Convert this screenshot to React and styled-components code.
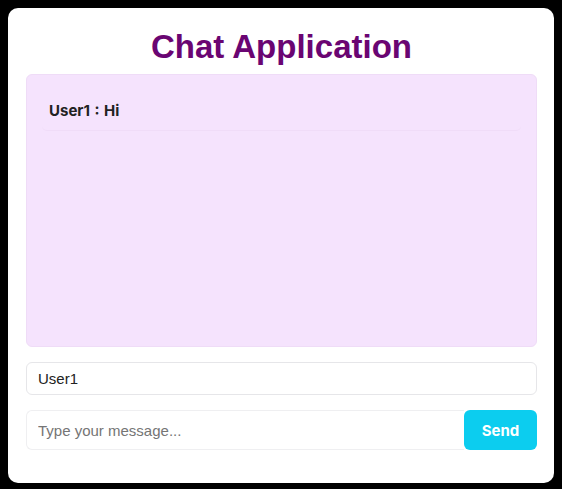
import React, { useState } from "react";
import styled, { createGlobalStyle } from "styled-components";

const Global = createGlobalStyle`
  html, body { background: #000; }
  body { margin: 8px; font-family: "Liberation Sans", Arial, sans-serif; }
  * { box-sizing: border-box; }
`;

const Card = styled.div`
  background: #fff;
  border-radius: 10px;
  padding: 20px 17px 33px 18px;
  display: flex;
  flex-direction: column;
`;

const Title = styled.h1`
  margin: 0 0 8px;
  text-align: center;
  font-family: "Liberation Sans", Arial, sans-serif;
  font-weight: 700;
  font-size: 33px;
  line-height: 38px;
  color: #6a0572;
`;

const ChatBox = styled.div`
  height: 273px;
  background: #f5e3fd;
  border: 1px solid #efdcf7;
  border-radius: 6px;
  padding: 15px;
  overflow-y: auto;
`;

const Message = styled.div`
  padding: 10px 7px 8px;
  line-height: 22px;
  border-bottom: 1px solid #f0dcf8;
  border-radius: 5px;
  font-family: Inter, "Noto Sans", sans-serif;
  font-weight: 700;
  font-size: 15px;
  word-spacing: 1px;
  color: #222;
`;

const Form = styled.div`
  display: flex;
  flex-direction: column;
  gap: 15px;
  margin-top: 15px;
`;

const Field = styled.input`
  width: 100%;
  height: ${(p) => p.$h}px;
  border: 1px solid #e6e6e9;
  border-radius: 6px;
  padding: 0 11px;
  font-family: "Liberation Sans", Arial, sans-serif;
  font-size: 15px;
  color: #222;
  background: #fff;
  outline: none;
  &::placeholder { color: #757575; }
`;

const Row = styled.div`
  display: flex;
`;

const MsgField = styled(Field)`
  flex: 1;
  border-color: #efeff1;
  border-radius: 6px 0 0 6px;
  border-right: none;
`;

const SendButton = styled.button`
  width: 73px;
  height: 40px;
  border: none;
  border-radius: 6px;
  background: #0ccdef;
  color: #fff;
  font-family: Inter, "Noto Sans", sans-serif;
  font-weight: 700;
  font-size: 15px;
  cursor: pointer;
`;

export default function App() {
  const [name, setName] = useState("User1");
  const [text, setText] = useState("");
  const [messages, setMessages] = useState([{ user: "User1", text: "Hi" }]);
  const send = () => {
    if (!text.trim()) return;
    setMessages((m) => [...m, { user: name, text }]);
    setText("");
  };
  return (
    <>
      <Global />
      <Card>
        <Title>Chat Application</Title>
        <ChatBox>
          {messages.map((m, i) => (
            <Message key={i}>
              {m.user} : {m.text}
            </Message>
          ))}
        </ChatBox>
        <Form>
          <Field $h={33} value={name} onChange={(e) => setName(e.target.value)} />
          <Row>
            <MsgField
              $h={40}
              placeholder="Type your message..."
              value={text}
              onChange={(e) => setText(e.target.value)}
            />
            <SendButton onClick={send}>Send</SendButton>
          </Row>
        </Form>
      </Card>
    </>
  );
}
